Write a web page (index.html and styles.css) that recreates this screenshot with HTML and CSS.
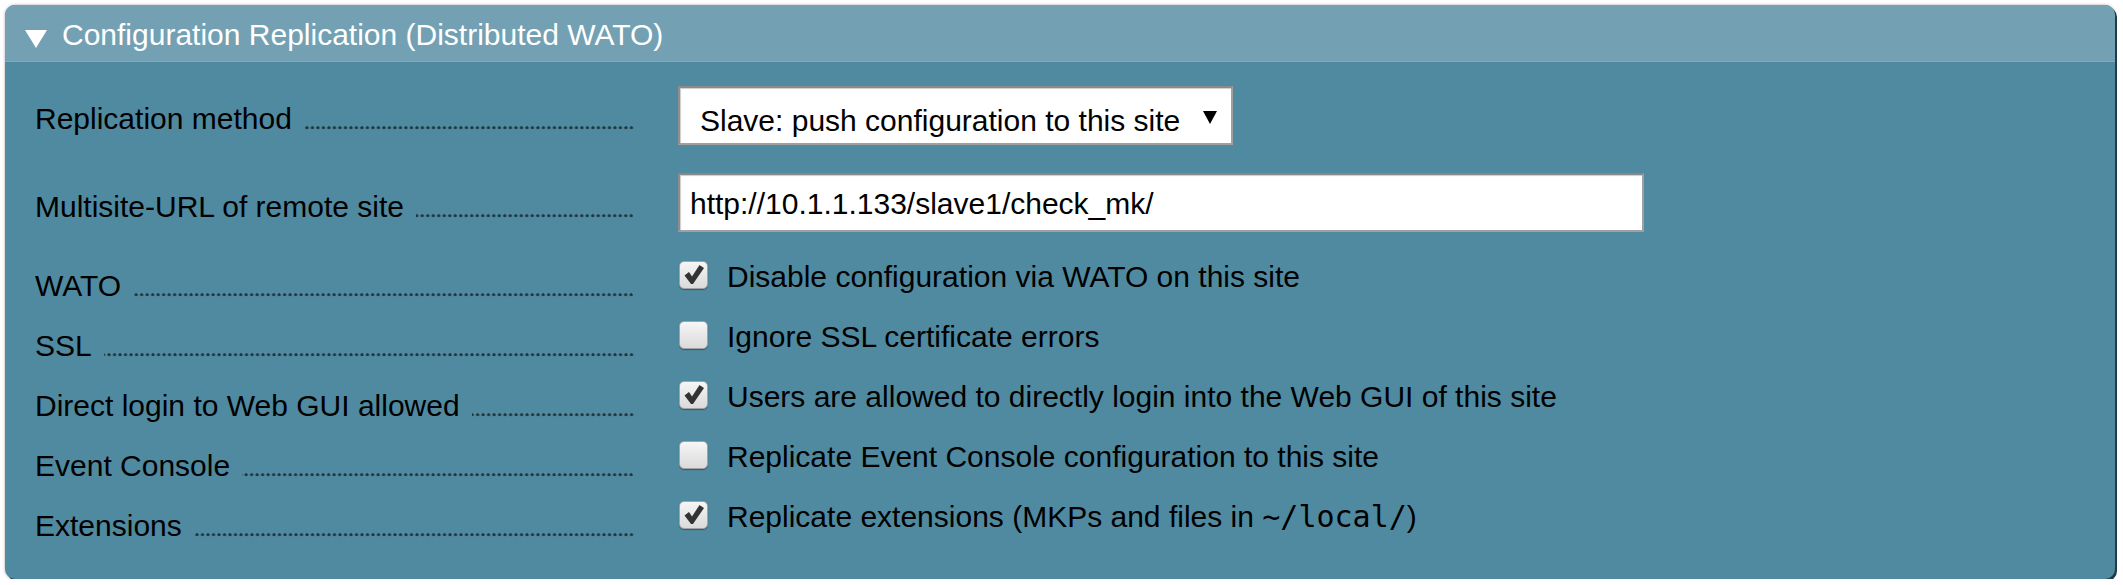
FILE: index.html
```html
<!DOCTYPE html>
<html lang="en">
<head>
<meta charset="utf-8">
<title>Configuration Replication</title>
<link rel="stylesheet" href="styles.css">
</head>
<body>
<div class="panel">
  <div class="panel-head">
    <svg class="tri" width="22" height="18" viewBox="0 0 22 18"><polygon points="0,0 22,0 11,18" fill="#fff"/></svg>
    <span class="title">Configuration Replication (Distributed WATO)</span>
  </div>
  <div class="panel-body">
    <div class="row row-select">
      <div class="legend"><span class="lt">Replication method</span><span class="dots"></span></div>
      <div class="value">
        <div class="select">
          <span>Slave: push configuration to this site</span>
          <svg class="arrow" width="14" height="13" viewBox="0 0 14 13"><polygon points="0,0 14,0 7,13" fill="#000"/></svg>
        </div>
      </div>
    </div>
    <div class="row row-input">
      <div class="legend"><span class="lt">Multisite-URL of remote site</span><span class="dots"></span></div>
      <div class="value"><div class="input">http://10.1.1.133/slave1/check_mk/</div></div>
    </div>
    <div class="row row-check">
      <div class="legend"><span class="lt">WATO</span><span class="dots"></span></div>
      <div class="value check">
        <span class="cb on"><svg width="29" height="28" viewBox="0 0 29 28"><path d="M5.5 14.5 L10 11 L13 15.5 L20.5 4 L25 7 L14 23 L12 23 Z" fill="#333"/></svg></span>
        <span class="ct">Disable configuration via WATO on this site</span>
      </div>
    </div>
    <div class="row row-check">
      <div class="legend"><span class="lt">SSL</span><span class="dots"></span></div>
      <div class="value check">
        <span class="cb"></span>
        <span class="ct">Ignore SSL certificate errors</span>
      </div>
    </div>
    <div class="row row-check">
      <div class="legend"><span class="lt">Direct login to Web GUI allowed</span><span class="dots"></span></div>
      <div class="value check">
        <span class="cb on"><svg width="29" height="28" viewBox="0 0 29 28"><path d="M5.5 14.5 L10 11 L13 15.5 L20.5 4 L25 7 L14 23 L12 23 Z" fill="#333"/></svg></span>
        <span class="ct">Users are allowed to directly login into the Web GUI of this site</span>
      </div>
    </div>
    <div class="row row-check">
      <div class="legend"><span class="lt">Event Console</span><span class="dots"></span></div>
      <div class="value check">
        <span class="cb"></span>
        <span class="ct">Replicate Event Console configuration to this site</span>
      </div>
    </div>
    <div class="row row-check">
      <div class="legend"><span class="lt">Extensions</span><span class="dots"></span></div>
      <div class="value check">
        <span class="cb on"><svg width="29" height="28" viewBox="0 0 29 28"><path d="M5.5 14.5 L10 11 L13 15.5 L20.5 4 L25 7 L14 23 L12 23 Z" fill="#333"/></svg></span>
        <span class="ct">Replicate extensions (MKPs and files in <code>~/local/</code>)</span>
      </div>
    </div>
  </div>
</div>
</body>
</html>
```

FILE: styles.css
```css
html, body {
  margin: 0;
  padding: 0;
  background: #ffffff;
}

body {
  font-family: "Liberation Sans", Arial, Helvetica, sans-serif;
  font-size: 30px;
  color: #000;
}

.panel {
  margin: 5px 0 0 5px;
  width: 2110px;
  border-radius: 10px;
  overflow: hidden;
  background: #508aa0;
  box-shadow: 2px 2px 0 #1f3d49, 0 0 3px rgba(0, 0, 0, 0.35);
}

.panel-head {
  height: 57px;
  box-sizing: border-box;
  padding: 2px 0 0 20px;
  display: flex;
  align-items: center;
  background: #73a1b3;
  border-bottom: 1px solid #7fabbc;
  color: #fff;
}

.tri {
  flex: none;
  margin-top: 10px;
  margin-right: 15px;
}

.title {
  line-height: 55px;
}

.panel-body {
  padding: 24px 0 18px 30px;
}

.row {
  display: grid;
  grid-template-columns: 599px 1fr;
  column-gap: 44px;
}

.row-select { height: 87px; }
.row-input { height: 88px; }
.row-check { height: 60px; }

.legend {
  display: flex;
  line-height: 34px;
  height: 34px;
}

.row-select .legend { padding-top: 16px; }
.row-input .legend { padding-top: 17px; }
.row-check .legend { padding-top: 8px; }

.lt {
  white-space: nowrap;
}

.dots {
  flex: 1;
  margin-left: 12px;
  background-image: radial-gradient(circle at 2.75px 25.8px, #24373f 1.3px, rgba(36, 55, 63, 0) 1.8px);
  background-size: 5.5px 34px;
  background-repeat: repeat-x;
  background-position: right top;
}

.select {
  width: 555px;
  height: 59px;
  box-sizing: border-box;
  border: 2px solid #a0a0a0;
  border-top-color: #8a8a8a;
  border-left-color: #8e8e8e;
  background: #fff;
  box-shadow: inset 1px 1px 1px rgba(0, 0, 0, 0.2);
  display: flex;
  justify-content: space-between;
  align-items: flex-start;
  padding: 16px 14px 0 20px;
  line-height: 34px;
}

.arrow {
  margin-top: 7px;
}

.input {
  width: 966px;
  height: 59px;
  box-sizing: border-box;
  border: 2px solid #a0a0a0;
  border-top-color: #878787;
  border-left-color: #8c8c8c;
  background: #fff;
  box-shadow: inset 1px 1px 1px rgba(0, 0, 0, 0.2);
  padding: 12px 0 0 10px;
  line-height: 34px;
}

.check {
  display: flex;
  align-items: flex-start;
}

.cb {
  flex: none;
  width: 29px;
  height: 28px;
  box-sizing: border-box;
  margin-left: 1px;
  border: 1px solid #a3a3a3;
  border-radius: 5px;
  background: linear-gradient(#f6f6f6, #dadada);
  box-shadow: 0 1px 1px rgba(0, 0, 0, 0.35);
  position: relative;
}

.cb svg {
  position: absolute;
  left: -1px;
  top: -1px;
}

.ct {
  margin-left: 19px;
  padding-top: 1px;
  line-height: 30px;
  white-space: nowrap;
}

code {
  font-family: "DejaVu Sans Mono", "Liberation Mono", monospace;
  font-size: 30px;
}
```
